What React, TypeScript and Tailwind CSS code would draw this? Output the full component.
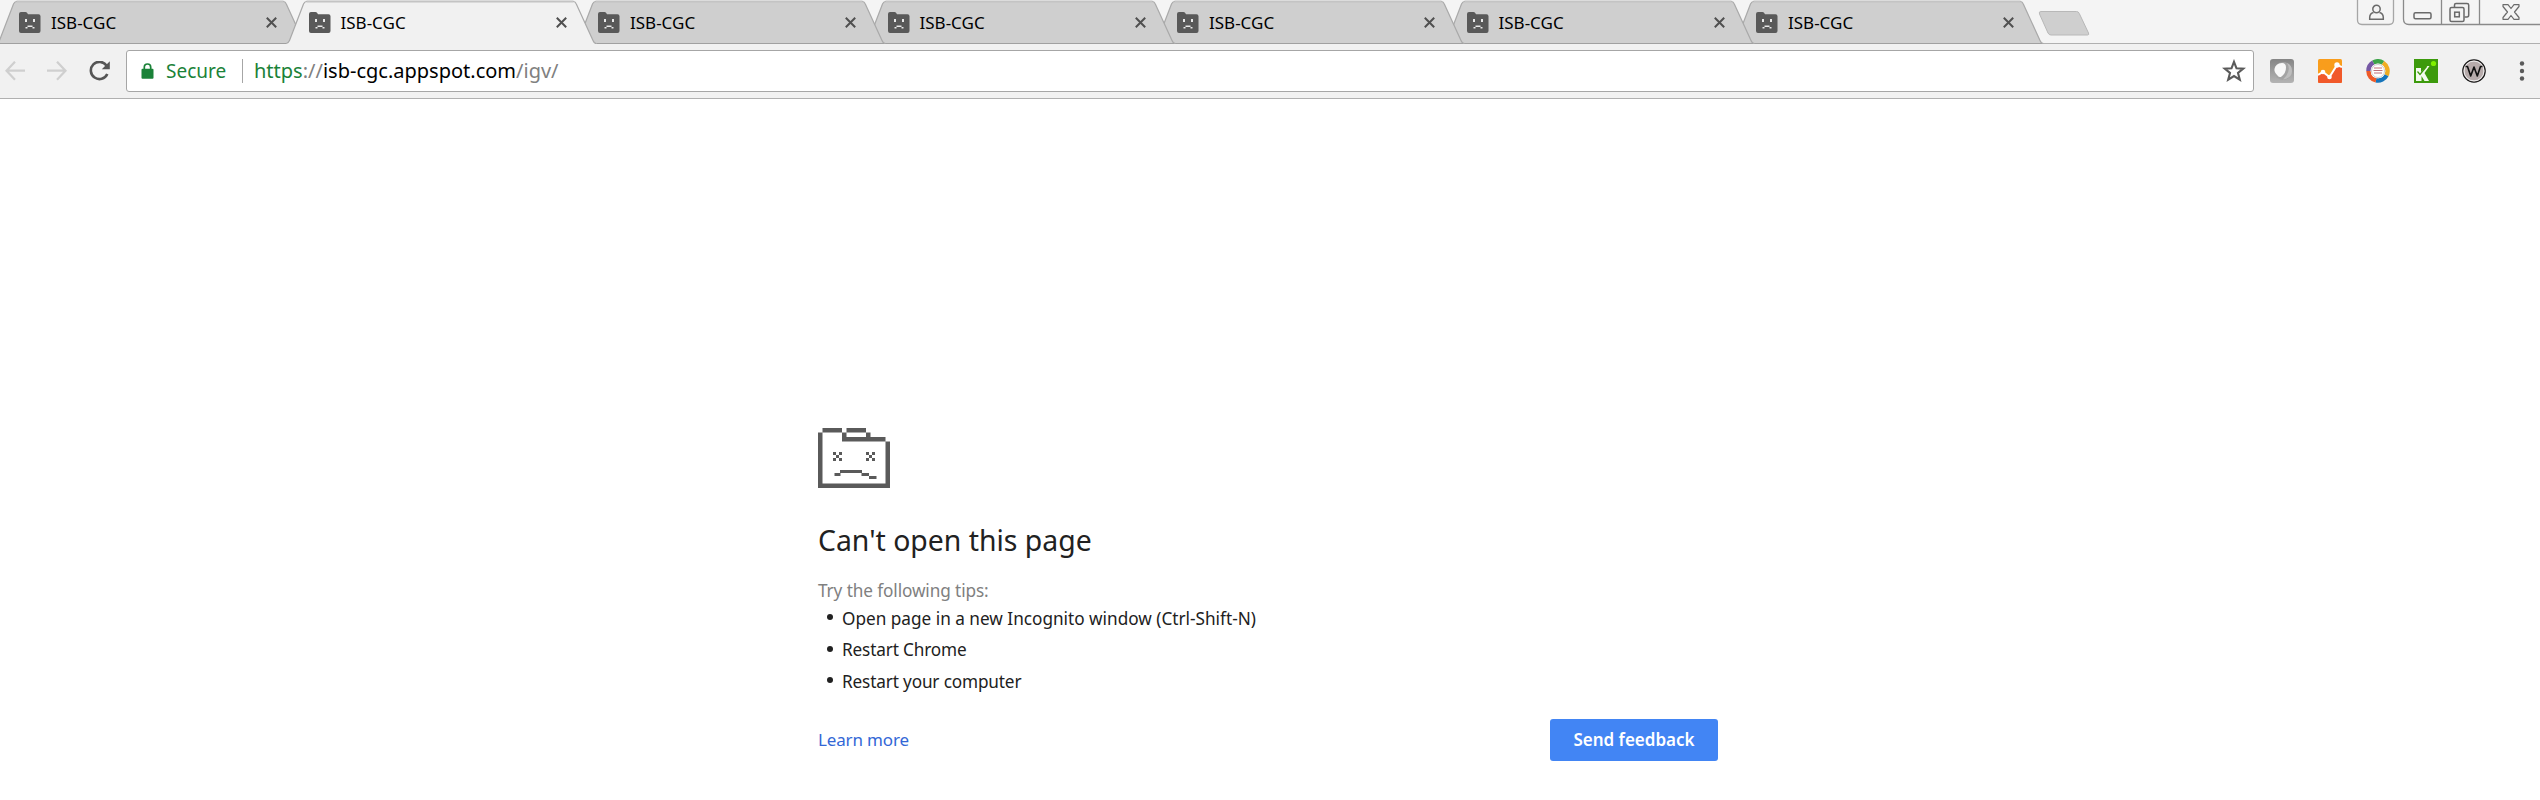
import type { ReactNode } from "react";

function Favicon() {
  return (
    <svg className="h-[22px] w-[22px] shrink-0" viewBox="0 0 22 22">
      <path d="M2 0H6.500Q8 0 9 2.300H19.500Q21.500 2.300 21.500 4.300V19Q21.500 21 19.500 21H2Q0 21 0 19V2Q0 0 2 0Z" fill="#595959" />
      <path d="M6 7h2v3H6zM14 7h2v3h-2zM8.500 13.500h5v1.500h-5zM6.500 15h2v1.500h-2zM13.500 15h2v1.500h-2z" fill="#e8e8e8" />
    </svg>
  );
}

const stacking = ["z-[7]", "z-[8]", "z-[5]", "z-[4]", "z-[3]", "z-[2]", "z-[1]"];

function Tab({ active, layer }: { active: boolean; layer: string }) {
  const edge = "M0 43.500Q2.500 43 3.500 40.500L17.500 4Q18.700 1.500 20.500 1.500H287.500Q289.300 1.500 290.300 4L307 40.500Q308.200 43.500 310.500 43.500";
  return (
    <div className={`relative h-[45px] w-[289.5px] shrink-0 ${layer}`}>
      <svg className="absolute -left-1 top-0" width="312" height="45" viewBox="0 0 312 45">
        <path d={active ? edge + "V45H0Z" : edge + "Z"} fill={active ? "#f1f1f1" : "#cfcfcf"} />
        <path d={edge} fill="none" stroke="#a9a9a9" strokeWidth="1.200" />
        <path d="M20.500 1.500H287.500" stroke="#c4c4c4" strokeWidth="1.800" />
        {!active && <path d="M1 43.500H309" stroke="#a0a0a0" />}
      </svg>
      <div className="relative flex h-[45px] items-center pl-[19px]">
        <Favicon />
        <span className="mb-px ml-[10px] w-[215px] text-[17px] leading-none text-black">ISB-CGC</span>
        <svg className="h-[11px] w-[11px] shrink-0" viewBox="0 0 11 11">
          <path d="M0.800 0.800L10.200 10.200M10.200 0.800L0.800 10.200" stroke="#505050" strokeWidth="2" />
        </svg>
      </div>
    </div>
  );
}

function WindowControls() {
  return (
    <svg className="ml-auto h-[27px] w-[184px]" viewBox="2356 0 184 27" fill="none" stroke="#8a8a8a" strokeWidth="1.300">
      <path d="M2357.500 0V20Q2357.500 24.500 2362 24.500H2389Q2393.500 24.500 2393.500 20V0" stroke="#a6a6a6" />
      <path d="M2403.500 0V19Q2403.500 24.500 2409 24.500H2540M2441.500 0V24.500M2479.500 0V24.500" />
      <g stroke="#6a6a6a" strokeWidth="1.500">
        <circle cx="2376.500" cy="9" r="3.700" />
        <path d="M2373.500 12.500Q2369.700 13.500 2369.700 17.500V19.300H2383.300V17.500Q2383.300 13.500 2379.500 12.500" />
        <rect x="2414" y="12.700" width="17" height="6" rx="1.500" />
        <path d="M2454.500 7V5Q2454.500 3.500 2456 3.500H2467Q2468.700 3.500 2468.700 5V15Q2468.700 17 2467 17H2464.500" />
        <rect x="2450" y="7.500" width="14" height="14" rx="1.500" />
        <rect x="2454.700" y="12.200" width="4.600" height="4.600" />
        <path d="M2503 4.700H2508L2511 8.500L2514 4.700H2519V6.500L2514.500 12L2519 17.500V19.300H2514L2511 15.500L2508 19.300H2503V17.500L2507.500 12L2503 6.500Z" strokeWidth="1.200" strokeLinejoin="round" />
      </g>
    </svg>
  );
}

function Extension({ children }: { children: ReactNode }) {
  return (
    <svg className="h-6 w-6 shrink-0" viewBox="0 0 24 24">
      {children}
    </svg>
  );
}

function Extensions() {
  return (
    <div className="ml-4 flex items-center gap-6">
      <Extension>
        <defs>
          <linearGradient id="gray" x1="0" y1="0" x2="0" y2="1">
            <stop offset="0" stopColor="#858585" />
            <stop offset="1" stopColor="#b4b4b4" />
          </linearGradient>
        </defs>
        <rect width="24" height="24" rx="3" fill="url(#gray)" />
        <circle cx="13" cy="12" r="9" fill="#a3a3a3" />
        <path d="M17 4Q22 12 13 20.500Q22 19 22 12Q22 6 17 4Z" fill="#bdbdbd" />
        <path d="M4.500 10Q5.500 4.500 12 4Q16 4 16 8.500Q16 14 11.500 17.500Q9.500 19 7.500 16.500Q4 13 4.500 10Z" fill="#f8f8f8" />
      </Extension>
      <Extension>
        <rect width="24" height="24" rx="1.500" fill="#f99d1c" />
        <path d="M0 16L5 13L11 18L19 6L24 8V22.500Q24 24 22.500 24H1.500Q0 24 0 22.500Z" fill="#f1592a" />
        <path d="M0 16L5 13L11.500 18L19 6L24 8" fill="none" stroke="#fff" strokeWidth="2" />
        <circle cx="5" cy="13" r="2.300" fill="#fff" />
        <circle cx="11.500" cy="18" r="2.300" fill="#fff" />
        <circle cx="19" cy="6" r="2.700" fill="#fff" />
      </Extension>
      <Extension>
        <g fill="none" strokeWidth="4.500">
          <path d="M7.300 3.500A9.500 9.500 0 0 1 17 3.900" stroke="#3da449" />
          <path d="M17 3.900A9.500 9.500 0 0 1 20.500 16.200" stroke="#efac22" />
          <path d="M20.500 16.200A9.500 9.500 0 0 1 10 21.300" stroke="#1675bb" />
          <path d="M10 21.300A9.500 9.500 0 0 1 2.500 12" stroke="#ee5a28" />
          <path d="M2.500 12A9.500 9.500 0 0 1 7.300 3.500" stroke="#7658a5" />
        </g>
        <circle cx="12" cy="12" r="7.300" fill="#fff" />
        <circle cx="12" cy="12" r="6.500" fill="none" stroke="#aaa" strokeWidth="0.600" />
        <path d="M8 9H16M7.500 11.500H16.500M8 14H16" stroke="#c0707a" strokeWidth="1" />
      </Extension>
      <Extension>
        <rect width="24" height="24" fill="#3c9a0c" />
        <path d="M2 9H7V13L13.500 7H15.500L10.500 14L15 22H10.500L7.500 17V22H2Z" fill="#f4faef" />
        <path d="M3.500 12.500L6 15.500L12.500 7.500" fill="none" stroke="#3c9a0c" strokeWidth="1.200" />
        <circle cx="19.500" cy="4.500" r="2.600" fill="#7ff000" />
      </Extension>
      <Extension>
        <circle cx="12" cy="12" r="11.200" fill="#b7abab" stroke="#181818" strokeWidth="1.200" />
        <circle cx="12" cy="12" r="9.900" fill="none" stroke="#eee" strokeWidth="1" />
        <path d="M3.500 7.500H5.500L8.700 17L12 8L15.300 17L18.500 7.500H20.500" fill="none" stroke="#111" strokeWidth="1.600" strokeLinejoin="round" />
      </Extension>
      <svg className="ml-[9px] h-6 w-[6px]" viewBox="0 0 6 24" fill="#5a5a5a">
        <circle cx="3" cy="4.500" r="2.200" />
        <circle cx="3" cy="12" r="2.200" />
        <circle cx="3" cy="19.500" r="2.200" />
      </svg>
    </div>
  );
}

function Toolbar() {
  return (
    <div className="flex h-[55px] items-start border-b border-[#b0b0b0] bg-[#f1f1f1] pt-[6px]">
      <div className="flex h-[42px] w-[126px] shrink-0 items-center">
        <svg className="ml-[5px] h-5 w-[106px]" viewBox="5 61 106 20" fill="none">
          <g stroke="#cfcfcf" strokeWidth="2.200">
            <path d="M25 70.700H7M15 61.700L6.500 70.700L15 79.700" />
            <path d="M47 70.700H65M57 61.700L65.500 70.700L57 79.700" />
          </g>
          <path d="M106.500 65.500A8.600 8.600 0 1 0 107.300 74" stroke="#555" strokeWidth="2.600" />
          <path d="M109.800 61.300V69.300H101.800Z" fill="#555" />
        </svg>
      </div>
      <div className="flex h-[42px] w-[2128px] shrink-0 items-center rounded-[3px] border border-[#a6a6a6] bg-white text-[20px]">
        <svg className="ml-[14px] h-4 w-[13px]" viewBox="0 0 13 16">
          <path d="M3.300 7V4.300Q3.300 1 6.500 1Q9.700 1 9.700 4.300V7" fill="none" stroke="#1a8238" strokeWidth="1.700" />
          <rect x="0.500" y="5.800" width="12" height="10" rx="1" fill="#1a8238" />
        </svg>
        <span className="ml-3 w-[76px] text-[19px] text-[#1a8238]">Secure</span>
        <span className="h-6 w-px bg-[#a6a6a6]" />
        <span className="ml-[11px] whitespace-nowrap">
          <span className="text-[#1a8238]">https</span>
          <span className="text-[#808080]">://</span>
          <span className="text-black">isb-cgc.appspot.com</span>
          <span className="text-[#808080]">/igv/</span>
        </span>
        <svg className="ml-auto mr-[7px] h-6 w-6" viewBox="0 0 24 24">
          <path d="M12 2.800L14.500 9.300L21.300 9.600L16 14L17.800 20.700L12 17L6.200 20.700L8 14L2.700 9.600L9.500 9.300Z" fill="none" stroke="#5a5a5a" strokeWidth="2.100" />
        </svg>
      </div>
      <div className="flex h-[42px] items-center">
        <Extensions />
      </div>
    </div>
  );
}

function SadFolder() {
  return (
    <svg className="h-[60px] w-[72px]" viewBox="0 0 72 60" fill="#5a5a5a">
      <path d="M4.500 0H24V4.500H4.500zM28.500 0H48V4.500H28.500zM24 4.500H28.500V9H67.500V13.500H24zM48 4.500H52.500V9H48zM0 4.500H4.500V55.500H67.500V13.500H72V60H0z" />
      <path d="M15 24h3v3h3v3h-3v3h-3v-3h3v-3h-3zM21 24h3v3h-3zM21 30h3v3h-3zM48 24h3v3h3v3h-3v3h-3v-3h3v-3h-3zM54 24h3v3h-3zM54 30h3v3h-3z" />
      <path d="M16.500 45H22V42H44V45H51V48H58.500V51H51V48H43.500V45H22.500V48H16.500Z" />
    </svg>
  );
}

const tips = [
  { text: "Open page in a new Incognito window (Ctrl-Shift-N)", tracking: "tracking-normal" },
  { text: "Restart Chrome", tracking: "tracking-[-0.15px]" },
  { text: "Restart your computer", tracking: "tracking-[-0.15px]" },
];

export default function App() {
  return (
    <div className="flex h-[800px] w-[2540px] flex-col overflow-hidden bg-white font-['Noto_Sans','Open_Sans',sans-serif]">
      <header className="flex h-11 shrink-0 border-b border-[#b0b0b0] bg-[#f4f4f4]">
        {stacking.map((layer, i) => (
          <Tab key={layer} active={i === 1} layer={layer} />
        ))}
        <svg className="ml-[11px] mt-[10px] h-[27px] w-[54px]" viewBox="0 0 54 27">
          <path d="M3 1.500H38.500Q40.500 1.500 41.300 3.500L50.500 23Q51.300 25 49.500 25H13Q11 25 10 23L1.500 4Q0.500 1.500 3 1.500Z" fill="#cfcfcf" stroke="#b8b8b8" />
        </svg>
        <WindowControls />
      </header>
      <Toolbar />
      <main className="flex flex-col pl-[818px] pt-[329px]">
        <SadFolder />
        <h1 className="mt-[32px] text-[28.4px] leading-[40px] text-[#212121]">Can't open this page</h1>
        <p className="mt-[17px] text-[17.2px] leading-[28px] tracking-[-0.1px] text-[#808080]">Try the following tips:</p>
        <ul className="-mt-[2px] flex flex-col text-[17.2px] text-[#212121]">
          {tips.map((tip) => (
            <li key={tip.text} className="flex h-[31.5px] items-center">
              <span className="mb-[3px] ml-[9px] mr-[9px] h-[6px] w-[6px] rounded-full bg-[#212121]" />
              <span className={tip.tracking}>{tip.text}</span>
            </li>
          ))}
        </ul>
        <div className="mt-[21.5px] flex h-[42px] w-[900px] items-center justify-between">
          <a className="text-[17px] tracking-[-0.15px] text-[#3367d6]">Learn more</a>
          <button className="h-[42px] w-[168px] rounded-[3px] bg-[#4285f4] text-[17px] font-semibold text-white">Send feedback</button>
        </div>
      </main>
    </div>
  );
}
